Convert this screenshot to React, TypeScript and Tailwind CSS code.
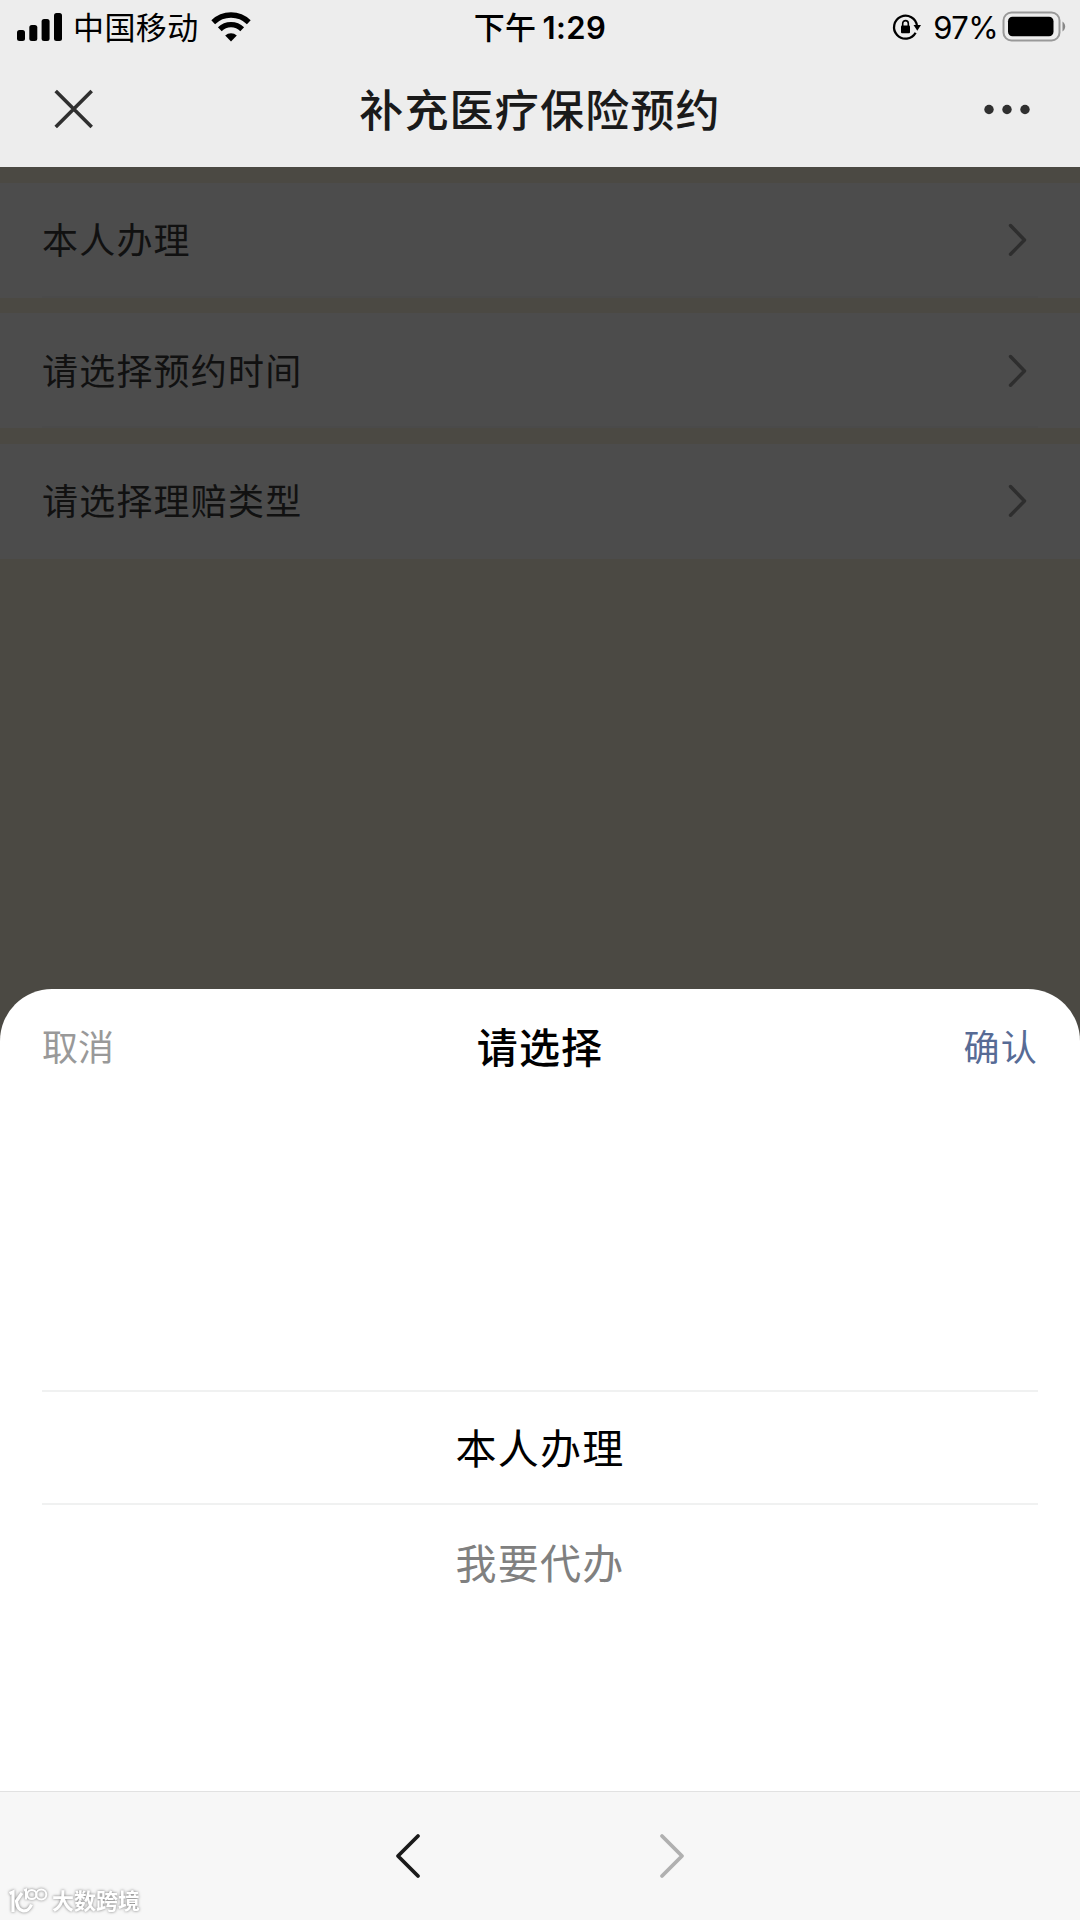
import clsx from "clsx";

const rows = ["本人办理", "请选择预约时间", "请选择理赔类型"];

interface ChevronProps {
  className?: string;
}

function StatusBar() {
  return (
    <div className="grid h-[54px] grid-cols-[1fr_auto_1fr] items-center text-[31px] leading-none text-black">
      <div className="flex items-center pl-[17px]">
        <svg width="46" height="30" viewBox="0 0 46 30">
          <rect x="0" y="18" width="8" height="11" rx="2.5" />
          <rect x="12.3" y="13" width="8" height="16" rx="2.5" />
          <rect x="24.6" y="7" width="8" height="22" rx="2.5" />
          <rect x="37" y="1" width="8" height="28" rx="2.5" />
        </svg>
        <span className="ml-[10px] tracking-[0.4px]">中国移动</span>
        <svg className="ml-[12px]" width="40" height="30" viewBox="0 0 40 30">
          <g fill="none" stroke="#000" strokeWidth="5.4">
            <path d="M2.2 10.2 A25.5 25.5 0 0 1 37.8 10.2" />
            <path d="M8.8 17.2 A16 16 0 0 1 31.2 17.2" />
          </g>
          <path d="M20 29.5 L14.2 23.6 A8.3 8.3 0 0 1 25.8 23.6 Z" />
        </svg>
      </div>
      <div className="flex items-center font-medium">
        <span className="tracking-[0.4px]">下午</span>
        <span className="ml-[6px] font-semibold tracking-[0.4px]">1:29</span>
      </div>
      <div className="flex items-center justify-end pr-[14px]">
        <svg width="30" height="28" viewBox="0 0 30 28">
          <path d="M24.6 19.8 A11.5 11.5 0 1 1 26 13" fill="none" stroke="#000" strokeWidth="2.3" />
          <path d="M22.5 12 H30 L26.3 17.8 Z" />
          <rect x="10" y="12.4" width="9" height="7.8" rx="1" />
          <path d="M11.7 13 V10.4 A2.8 2.8 0 0 1 17.3 10.4 V13" fill="none" stroke="#000" strokeWidth="1.6" />
        </svg>
        <span className="ml-[12px] tracking-[-0.6px]">97%</span>
        <svg className="ml-[4px]" width="64" height="32" viewBox="0 0 64 32">
          <rect x="1.5" y="1.5" width="56" height="28" rx="8" fill="none" stroke="#999" strokeWidth="2" />
          <rect x="6" y="5.8" width="45.5" height="19.4" rx="4.5" />
          <path d="M60.5 10.5 A6 6 0 0 1 60.5 20.5 Z" fill="#888" />
        </svg>
      </div>
    </div>
  );
}

function NavBar() {
  return (
    <div className="flex h-[113px] items-center justify-between px-[48px] pb-[4px]">
      <svg width="50" height="50" viewBox="0 0 50 50" stroke="#303030" strokeWidth="3.6">
        <path d="M7.7 7 L43.7 43 M43.7 7 L7.7 43" />
      </svg>
      <h1 className="pt-[4px] text-[44px] font-medium tracking-[1.2px] text-[#1a1a1a]">补充医疗保险预约</h1>
      <svg width="50" height="12" viewBox="0 0 50 12" fill="#303030">
        <circle cx="7" cy="6.5" r="4.7" />
        <circle cx="25" cy="6.5" r="4.7" />
        <circle cx="43" cy="6.5" r="4.7" />
      </svg>
    </div>
  );
}

function RowChevron() {
  return (
    <svg width="20" height="34" viewBox="0 0 20 34" fill="none" stroke="#2e2e2e" strokeWidth="3.4" strokeLinecap="round" strokeLinejoin="round">
      <path d="M2.5 3.5 L16.5 18 L2.5 32.3" />
    </svg>
  );
}

function PageChevron({ className }: ChevronProps) {
  return (
    <svg className={className} width="26" height="46" viewBox="0 0 26 46" fill="none" stroke="currentColor" strokeWidth="3.8" strokeLinecap="round" strokeLinejoin="round">
      <path d="M23 3 L3 23 L23 43" />
    </svg>
  );
}

function Watermark() {
  return (
    <div className="absolute bottom-[5px] left-[8px] flex items-end text-white drop-shadow-[0_0_1.5px_#777]">
      <svg width="40" height="28" viewBox="0 0 40 28" fill="none" stroke="currentColor" strokeWidth="3.2">
        <path d="M1.5 6.5 L5 5 V25" />
        <path d="M14 6 L8.5 14 C9.5 26 20 27 23.5 17.5" />
        <path d="M16 3.5 L18 2.5 V12.5" strokeWidth="2" />
        <circle cx="23.8" cy="7.5" r="4.6" strokeWidth="2" />
        <circle cx="33.3" cy="7.5" r="5" strokeWidth="2" />
      </svg>
      <span className="ml-[4px] text-[22px] leading-[28px] font-bold">大数跨境</span>
    </div>
  );
}

export default function App() {
  return (
    <div className="flex h-[1920px] w-[1080px] flex-col overflow-hidden bg-[#4b4943] font-['Inter','Noto_Sans_CJK_SC',sans-serif]">
      <header className="h-[167px] bg-[#ededed]">
        <StatusBar />
        <NavBar />
      </header>

      {/* Dimmed form behind the picker */}
      <main className="flex flex-1 flex-col gap-[15.5px] pt-[15.5px]">
        {rows.map((label, i) => (
          <div key={label} className="h-[115px] bg-[#4c4c4c] px-[42px]">
            <div
              className={clsx(
                "flex h-full items-center justify-between border-b-2 pr-[10px]",
                i < rows.length - 1 ? "border-[#4a4a4a]" : "border-transparent"
              )}
            >
              <span className="pt-[4px] text-[36px] tracking-[1.2px] text-[#111]">{label}</span>
              <RowChevron />
            </div>
          </div>
        ))}
      </main>

      {/* Picker sheet */}
      <section className="flex h-[802px] flex-col rounded-t-[52px] bg-white px-[42px]">
        <div className="grid h-[118px] grid-cols-3 items-center text-[36px]">
          <button className="text-left text-[#999]">取消</button>
          <h2 className="pt-[1px] text-center text-[41px] font-medium tracking-[1.2px] text-black">请选择</h2>
          <button className="text-right tracking-[1.2px] text-[#576b95]">确认</button>
        </div>
        <ul className="mt-[283px] text-center text-[41px] tracking-[1.3px]">
          <li className="flex h-[115px] items-center justify-center border-y-2 border-[#f0f1f1] pt-[5px] text-black">本人办理</li>
          <li className="flex h-[115px] items-center justify-center pt-[4px] text-[#808080]">我要代办</li>
        </ul>
      </section>

      <footer className="relative flex h-[129px] justify-center gap-[238px] border-t border-[#e2e2e2] bg-[#f7f7f7] pt-[41px]">
        <PageChevron className="text-[#1a1a1a]" />
        <PageChevron className="rotate-180 text-[#b0b0b0]" />
        <Watermark />
      </footer>
    </div>
  );
}
